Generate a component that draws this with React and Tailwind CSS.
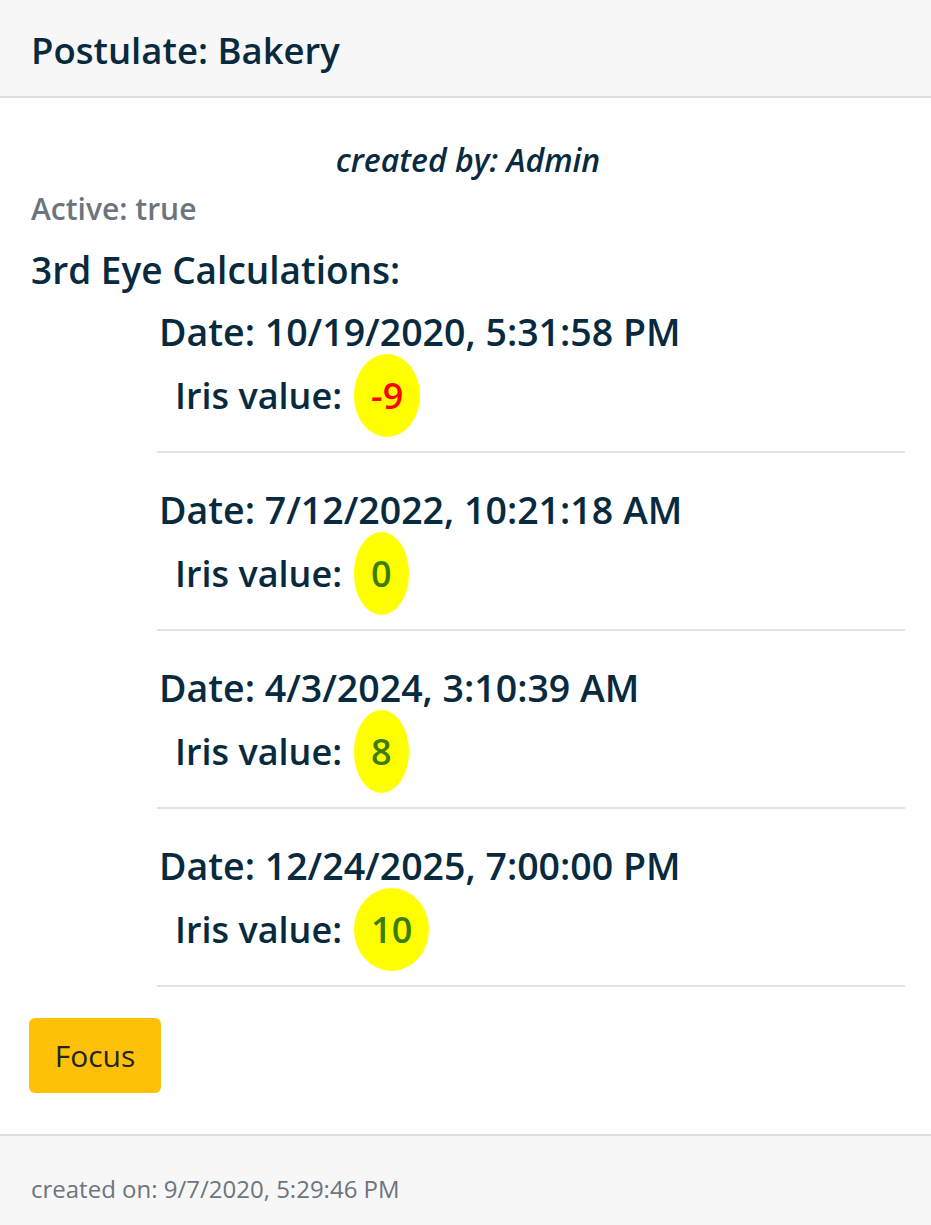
const readings = [
  { date: '10/19/2020, 5:31:58 PM', iris: -9 },
  { date: '7/12/2022, 10:21:18 AM', iris: 0 },
  { date: '4/3/2024, 3:10:39 AM', iris: 8 },
  { date: '12/24/2025, 7:00:00 PM', iris: 10 },
];

const font = { fontFamily: '"Open Sans", "Noto Sans", sans-serif' };

function IrisBadge({ value }) {
  return (
    <span
      className={`inline-flex h-[83px] items-center rounded-[50%] bg-[#ffff00] px-[17px] ${
        value < 0 ? 'text-[#ff0000]' : 'text-[#3b7d06]'
      }`}
    >
      {value}
    </span>
  );
}

export default function App() {
  return (
    <div className="min-h-screen bg-white text-[#082a3e]" style={font}>
      <div className="flex h-[98px] items-center border-b-2 border-[#dfdfdf] bg-[#f7f7f7] px-[31px]">
        <h3 className="pt-[4px] text-[36.5px] font-semibold leading-[44px]">Postulate: Bakery</h3>
      </div>

      <div className="px-[31px] pt-[42px] pb-[41px] pr-[26px]">
        <p className="text-center text-[32px] font-semibold italic leading-[40px]">created by: Admin</p>
        <p className="mt-[11px] text-[30px] font-semibold leading-[36px] text-[#6c757d]">Active: true</p>
        <h4 className="mt-[21px] text-[37px] font-semibold leading-[44px]">3rd Eye Calculations:</h4>

        <ul className="ml-[126px]">
          {readings.map((r) => (
            <li key={r.date} className="border-b-2 border-[#e2e2e2] pt-[35px] pb-[14px] first:pt-[18px]">
              <div className="pl-[2px] text-[37.5px] font-semibold leading-[44px]">Date: {r.date}</div>
              <div className="flex items-center gap-[12px] pl-[18px] text-[36px] font-semibold leading-[44px]">
                <span>Iris value:</span>
                <IrisBadge value={r.iris} />
              </div>
            </li>
          ))}
        </ul>

        <button className="-ml-[2px] mt-[31px] h-[75px] w-[132px] rounded-[6px] bg-[#ffc107] text-[30px] text-[#212529]">
          Focus
        </button>
      </div>

      <div className="border-t-2 border-[#dfdfdf] bg-[#f7f7f7] px-[31px] pt-[38px] pb-[38px]">
        <p className="text-[24px] leading-[30px] text-[#6c757d]">created on: 9/7/2020, 5:29:46 PM</p>
      </div>
    </div>
  );
}
